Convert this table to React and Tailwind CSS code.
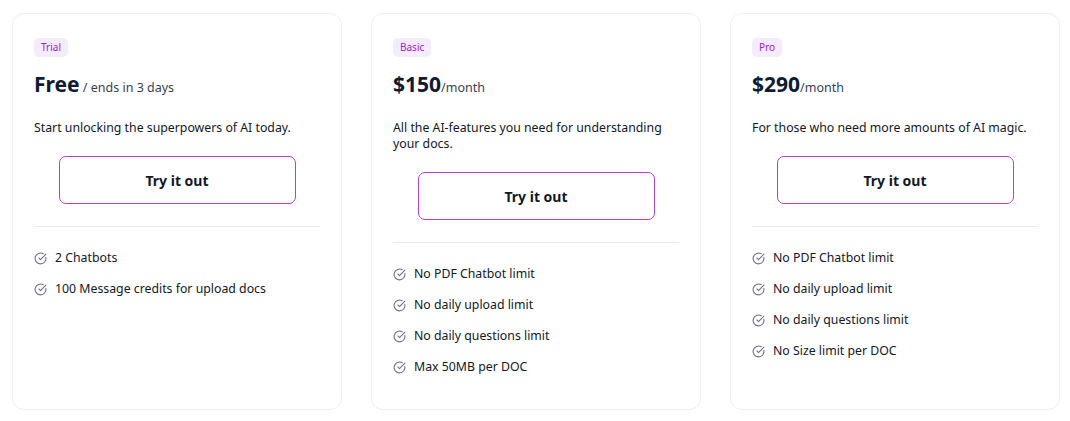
import React from "react";

const Check = () => (
  <svg width="13" height="13" viewBox="0 0 24 24" fill="none" stroke="#6b7280" strokeWidth="2" strokeLinecap="round" strokeLinejoin="round" className="shrink-0">
    <path d="M21.801 10A10 10 0 1 1 17 3.335" />
    <path d="m9 11 3 3L22 4" />
  </svg>
);

const plans = [
  {
    badge: "Trial",
    price: "Free",
    suffix: " / ends in 3 days",
    desc: "Start unlocking the superpowers of AI today.",
    features: ["2 Chatbots", "100 Message credits for upload docs"],
  },
  {
    badge: "Basic",
    price: "$150",
    suffix: "/month",
    desc: "All the AI-features you need for understanding your docs.",
    features: ["No PDF Chatbot limit", "No daily upload limit", "No daily questions limit", "Max 50MB per DOC"],
  },
  {
    badge: "Pro",
    price: "$290",
    suffix: "/month",
    desc: "For those who need more amounts of AI magic.",
    features: ["No PDF Chatbot limit", "No daily upload limit", "No daily questions limit", "No Size limit per DOC"],
  },
];

export default function App() {
  return (
    <div
      className="w-[1070px] h-[421px] bg-white flex gap-[29px] pl-[12px] pt-[13px] pb-[11px]"
      style={{ fontFamily: '"Noto Sans", "Open Sans", sans-serif' }}
    >
      {plans.map((p) => (
        <div key={p.badge} className="w-[330px] border border-[#efeff2] rounded-[12px] px-[21px] pt-[24px] flex flex-col">
          <div className="self-start h-[19px] px-[7px] rounded-[5px] bg-[#f4ecfd] text-[#a020c8] text-[10px] leading-[19px]">
            {p.badge}
          </div>
          <div className="mt-[11px] leading-[32px] text-[#0f1a33]">
            <span className="text-[21px] font-bold">{p.price}</span>
            <span className="text-[12.5px] text-[#374151]">{p.suffix}</span>
          </div>
          <p className="mt-[16px] text-[12.3px] leading-[16px] text-[#111827]">{p.desc}</p>
          <button className="mt-[20px] mx-auto w-[237px] h-[48px] rounded-[7px] border border-[#b43fd3] text-[14px] font-bold text-[#111827] bg-white">
            Try it out
          </button>
          <div className="mt-[22px] h-px bg-[#ebebef]" />
          <ul className="mt-[22px] flex flex-col gap-[13px]">
            {p.features.map((f) => (
              <li key={f} className="flex items-center gap-[8px] text-[12.3px] leading-[18px] text-[#111827]">
                <Check />
                <span>{f}</span>
              </li>
            ))}
          </ul>
        </div>
      ))}
    </div>
  );
}
